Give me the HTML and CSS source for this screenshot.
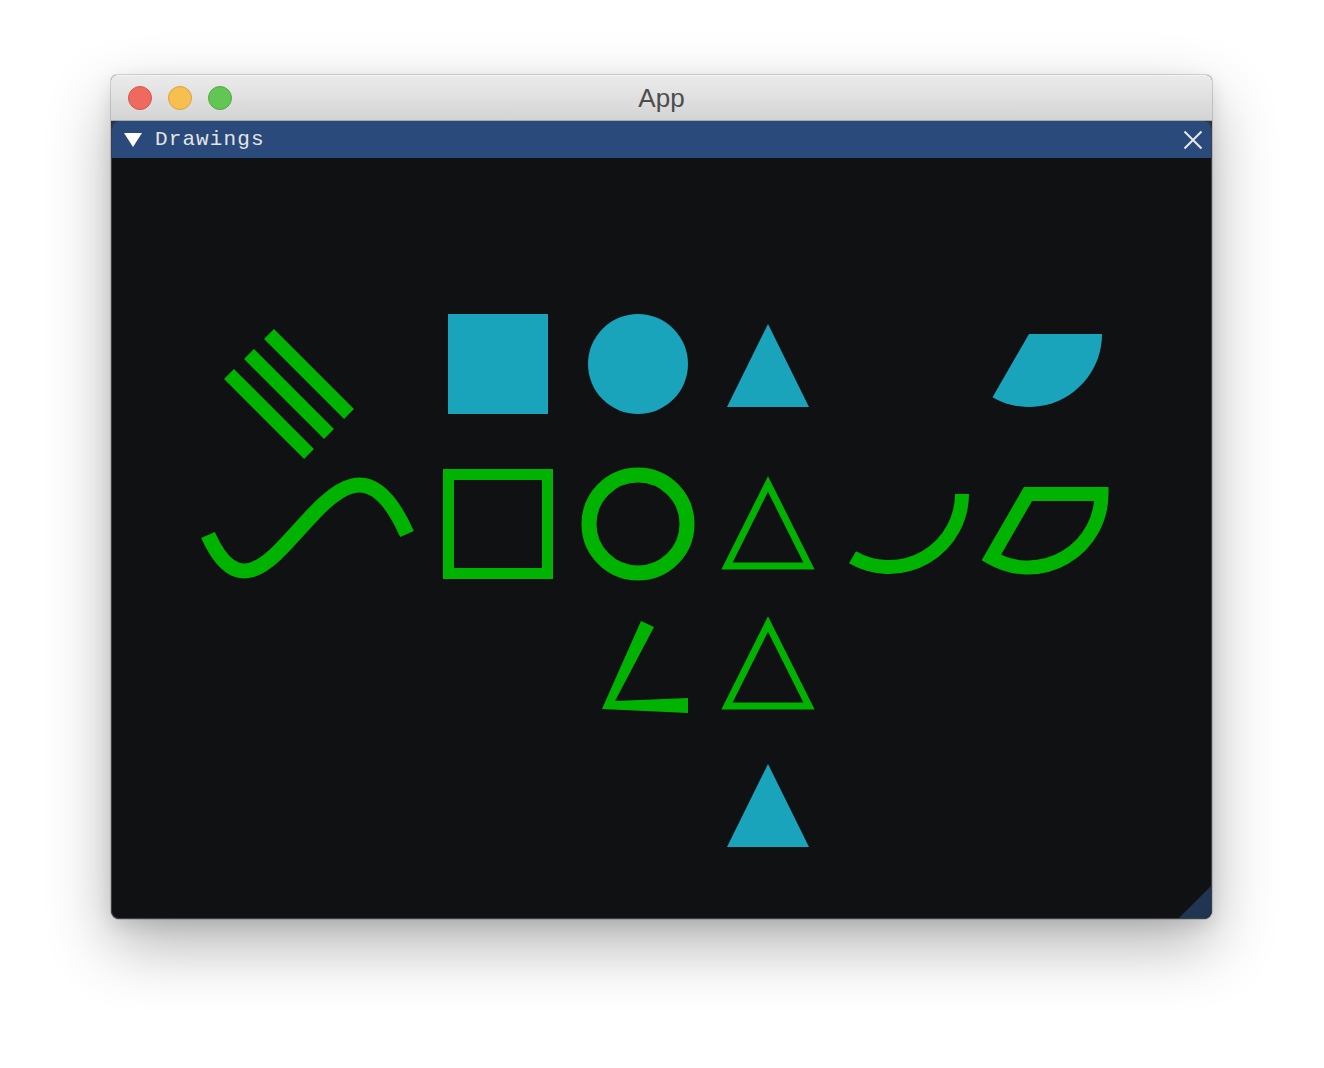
FILE: index.html
```html
<!DOCTYPE html>
<html>
<head>
<meta charset="utf-8">
<title>App</title>
<link rel="stylesheet" href="styles.css">
</head>
<body>
<div class="window">
  <div class="titlebar">
    <div class="lights">
      <span class="light red"></span>
      <span class="light yellow"></span>
      <span class="light green"></span>
    </div>
    <div class="title">App</div>
  </div>
  <div class="imgui">
    <div class="header">
      <svg class="arrow" width="18" height="14" viewBox="0 0 18 14"><polygon points="0,0 18,0 9,14" fill="#ffffff"/></svg>
      <span class="label">Drawings</span>
      <svg class="close" width="20" height="20" viewBox="0 0 20 20"><path d="M1.5 1.5 L18.5 18.5 M18.5 1.5 L1.5 18.5" stroke="#e8e8e8" stroke-width="2" fill="none"/></svg>
    </div>
    <svg class="canvas" width="1099" height="760" viewBox="112 158 1099 760">
      <g class="green-stroke">
        <line x1="269" y1="334" x2="349" y2="414" stroke-width="14"/>
        <line x1="249" y1="354" x2="329" y2="434" stroke-width="14"/>
        <line x1="229" y1="374" x2="309" y2="454" stroke-width="14"/>
      </g>
      <g class="teal-fill">
        <rect x="448" y="314" width="100" height="100"/>
        <circle cx="638" cy="364" r="50"/>
        <polygon points="768,324 727,407 809,407"/>
        <path d="M1029,334 L1102,334 A73,73 0 0 1 992.5,397.2 Z"/>
      </g>
      <g class="green-stroke">
        <path d="M208,535 C268,669 336,374 407,534" stroke-width="15"/>
        <rect x="448.5" y="474.5" width="99" height="99" stroke-width="11"/>
        <circle cx="638" cy="524" r="49" stroke-width="15"/>
        <polygon points="768,484 727,566 809,566" stroke-width="7"/>
        <path d="M962,494 A73,73 0 0 1 852.5,557.2" stroke-width="14"/>
        <path d="M1028,494 L1101.5,494 A73.5,73.5 0 0 1 991.25,557.65 Z" stroke-width="14"/>
        <polygon points="768,624 727,706 809,706" stroke-width="7"/>
      </g>
      <polygon class="green-fill" points="641,621 654,627 615,701 688,698 688,713 602,709"/>
      <polygon class="teal-fill" points="768,764 727,847 809,847"/>
      <polygon class="grip" points="1179,918 1211,886 1211,918"/>
    </svg>
  </div>
</div>
</body>
</html>
```

FILE: styles.css
```css
html, body {
  margin: 0;
  padding: 0;
  background: #ffffff;
}

body {
  width: 1324px;
  height: 1068px;
  padding: 75px 0 0 111px;
  box-sizing: border-box;
  overflow: hidden;
}

.window {
  width: 1101px;
  height: 844px;
  border-radius: 6px 6px 8px 8px;
  overflow: hidden;
  background: #2a3546;
  box-shadow: 0 0 0 1px rgba(0, 0, 0, 0.14), 0 26px 64px rgba(0, 0, 0, 0.30), 0 6px 18px rgba(0, 0, 0, 0.10);
  display: flex;
  flex-direction: column;
}

.titlebar {
  height: 46px;
  box-sizing: border-box;
  border-bottom: 1px solid #a9a9a9;
  border-top: 1px solid #f4f4f4;
  background: linear-gradient(to bottom, #ebebeb, #d4d4d4);
  display: flex;
  align-items: center;
  position: relative;
  flex: none;
}

.lights {
  display: flex;
  gap: 16px;
  padding-left: 17px;
  align-items: center;
}

.light {
  width: 24px;
  height: 24px;
  border-radius: 50%;
  box-sizing: border-box;
  display: block;
}

.red { background: #ef6a5e; border: 1px solid #d8544a; }
.yellow { background: #f6bf4f; border: 1px solid #dba33c; }
.green { background: #62c655; border: 1px solid #50aa40; }

.title {
  position: absolute;
  left: 0;
  right: 0;
  top: 0;
  bottom: 0;
  text-align: center;
  line-height: 45px;
  font-family: "Liberation Sans", Arial, sans-serif;
  font-size: 26px;
  color: #4d4d4d;
  pointer-events: none;
}

.imgui {
  flex: 1;
  background: #101113;
  border: 1px solid #3f3f49;
  border-top: none;
  border-radius: 8px;
  overflow: hidden;
  display: flex;
  flex-direction: column;
}

.header {
  height: 37px;
  box-sizing: border-box;
  background: #294a7a;
  display: flex;
  align-items: center;
  padding: 0 8px 0 12px;
  flex: none;
}

.arrow {
  display: block;
  flex: none;
}

.label {
  margin-left: 13px;
  font-family: "Liberation Mono", "DejaVu Sans Mono", monospace;
  font-size: 21px;
  letter-spacing: 1.1px;
  color: #e4e4e4;
  line-height: 1;
  flex: 1;
}

.close {
  display: block;
  flex: none;
}

.canvas {
  display: block;
  flex: none;
}

.green-stroke line,
.green-stroke path,
.green-stroke rect,
.green-stroke circle,
.green-stroke polygon {
  stroke: #00b300;
  fill: none;
  stroke-linejoin: miter;
  stroke-linecap: butt;
  stroke-miterlimit: 10;
}

.teal-fill rect,
.teal-fill circle,
.teal-fill polygon,
.teal-fill path,
polygon.teal-fill {
  fill: #19a4bc;
}

.green-fill {
  fill: #00b300;
}

.grip {
  fill: #1f3552;
}
```
